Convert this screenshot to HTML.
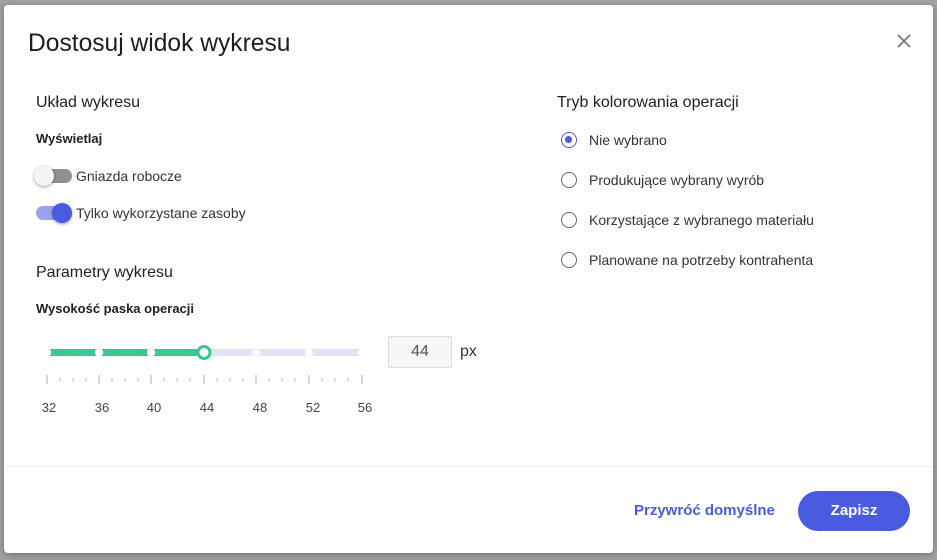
<!DOCTYPE html>
<html><head><meta charset="utf-8"><style>
*{box-sizing:border-box;margin:0;padding:0}
body{width:937px;height:560px;background:#a3a3a3;font-family:"Liberation Sans",sans-serif;position:relative;overflow:hidden;color:#212121}
.dlg{position:absolute;left:4px;top:5px;width:929px;height:548px;background:#fff;border-radius:4px;box-shadow:0 2px 8px rgba(0,0,0,.3)}
.a{position:absolute;white-space:nowrap}
.t{font-size:14px;color:#333}
.sep{position:absolute;left:0;right:0;top:461px;height:1px;background:#eee}
.rad{position:absolute;width:16px;height:16px;border-radius:50%;border:1.5px solid #666}
</style></head><body>
<div class="dlg">
<div class="a" style="left:24px;top:25px;font-size:24.6px;color:#1d1d1d">Dostosuj widok wykresu</div>
<svg class="a" style="left:892px;top:28px" width="16" height="16"><path d="M2 2L14 14M14 2L2 14" stroke="#777" stroke-width="1.8"/></svg>
<div class="a" style="left:32px;top:89px;font-size:16px">Układ wykresu</div>
<div class="a" style="left:32px;top:126px;font-size:13px;font-weight:bold">Wyświetlaj</div>
<div class="a" style="left:32px;top:164px;width:36px;height:14px;border-radius:7px;background:#909090"></div>
<div class="a" style="left:30px;top:161px;width:20px;height:20px;border-radius:50%;background:#f5f5f5;box-shadow:0 1px 3px rgba(0,0,0,.4)"></div>
<div class="a t" style="left:72px;top:163px">Gniazda robocze</div>
<div class="a" style="left:32px;top:201px;width:36px;height:14px;border-radius:7px;background:#9aa3ee"></div>
<div class="a" style="left:48px;top:198px;width:20px;height:20px;border-radius:50%;background:#4a5be0;box-shadow:0 1px 3px rgba(0,0,0,.4)"></div>
<div class="a t" style="left:72px;top:200px">Tylko wykorzystane zasoby</div>
<div class="a" style="left:32px;top:259px;font-size:16px">Parametry wykresu</div>
<div class="a" style="left:32px;top:296px;font-size:13px;font-weight:bold">Wysokość paska operacji</div>
<svg class="a" style="left:0;top:325px" width="380" height="85">
<rect x="43" y="19" width="315" height="7" rx="3.5" fill="#e2e3f7"/>
<rect x="43" y="19" width="157" height="7" rx="3.5" fill="#37c98f"/>
<g fill="#fff" stroke="#eee" stroke-width=".5"><circle cx="43" cy="22.5" r="4"/><circle cx="95" cy="22.5" r="4"/><circle cx="147" cy="22.5" r="4"/><circle cx="252" cy="22.5" r="4"/><circle cx="305" cy="22.5" r="4"/><circle cx="358" cy="22.5" r="4"/></g>
<circle cx="200" cy="22.5" r="6" fill="#fff" stroke="#37c98f" stroke-width="3"/>
<g stroke="#ccc" stroke-width="1.5">
<path d="M43 45v9M95 45v9M147 45v9M200 45v9M252 45v9M305 45v9M358 45v9"/>
<path d="M56 48v3M69 48v3M82 48v3M108 48v3M121 48v3M134 48v3M160 48v3M173 48v3M186 48v3M213 48v3M226 48v3M239 48v3M265 48v3M278 48v3M291 48v3M318 48v3M331 48v3M344 48v3"/></g>
<g font-size="13" fill="#444" text-anchor="middle" font-family="Liberation Sans"><text x="45" y="82">32</text><text x="98" y="82">36</text><text x="150" y="82">40</text><text x="203" y="82">44</text><text x="256" y="82">48</text><text x="309" y="82">52</text><text x="361" y="82">56</text></g>
</svg>
<div class="a" style="left:384px;top:331px;width:64px;height:32px;border:1px solid #ddd;background:#f6f6f6;border-radius:2px;font-size:16px;color:#555;text-align:center;line-height:30px">44</div>
<div class="a" style="left:456px;top:338px;font-size:16px;color:#333">px</div>
<div class="a" style="left:553px;top:89px;font-size:16px">Tryb kolorowania operacji</div>
<div class="rad" style="left:557px;top:127px;border-color:#4a5be0"><div style="position:absolute;left:3px;top:3px;width:7px;height:7px;border-radius:50%;background:#4a5be0"></div></div>
<div class="a t" style="left:585px;top:127px">Nie wybrano</div>
<div class="rad" style="left:557px;top:167px"></div>
<div class="a t" style="left:585px;top:167px">Produkujące wybrany wyrób</div>
<div class="rad" style="left:557px;top:207px"></div>
<div class="a t" style="left:585px;top:207px">Korzystające z wybranego materiału</div>
<div class="rad" style="left:557px;top:247px"></div>
<div class="a t" style="left:585px;top:247px">Planowane na potrzeby kontrahenta</div>
<div class="sep"></div>
<div class="a" style="left:630px;top:497px;font-size:15px;font-weight:bold;color:#4a5be0">Przywróć domyślne</div>
<div class="a" style="left:794px;top:486px;width:112px;height:40px;border-radius:20px;background:#4a5be0;color:#fff;font-size:15px;font-weight:bold;text-align:center;line-height:40px">Zapisz</div>
</div>
</body></html>
